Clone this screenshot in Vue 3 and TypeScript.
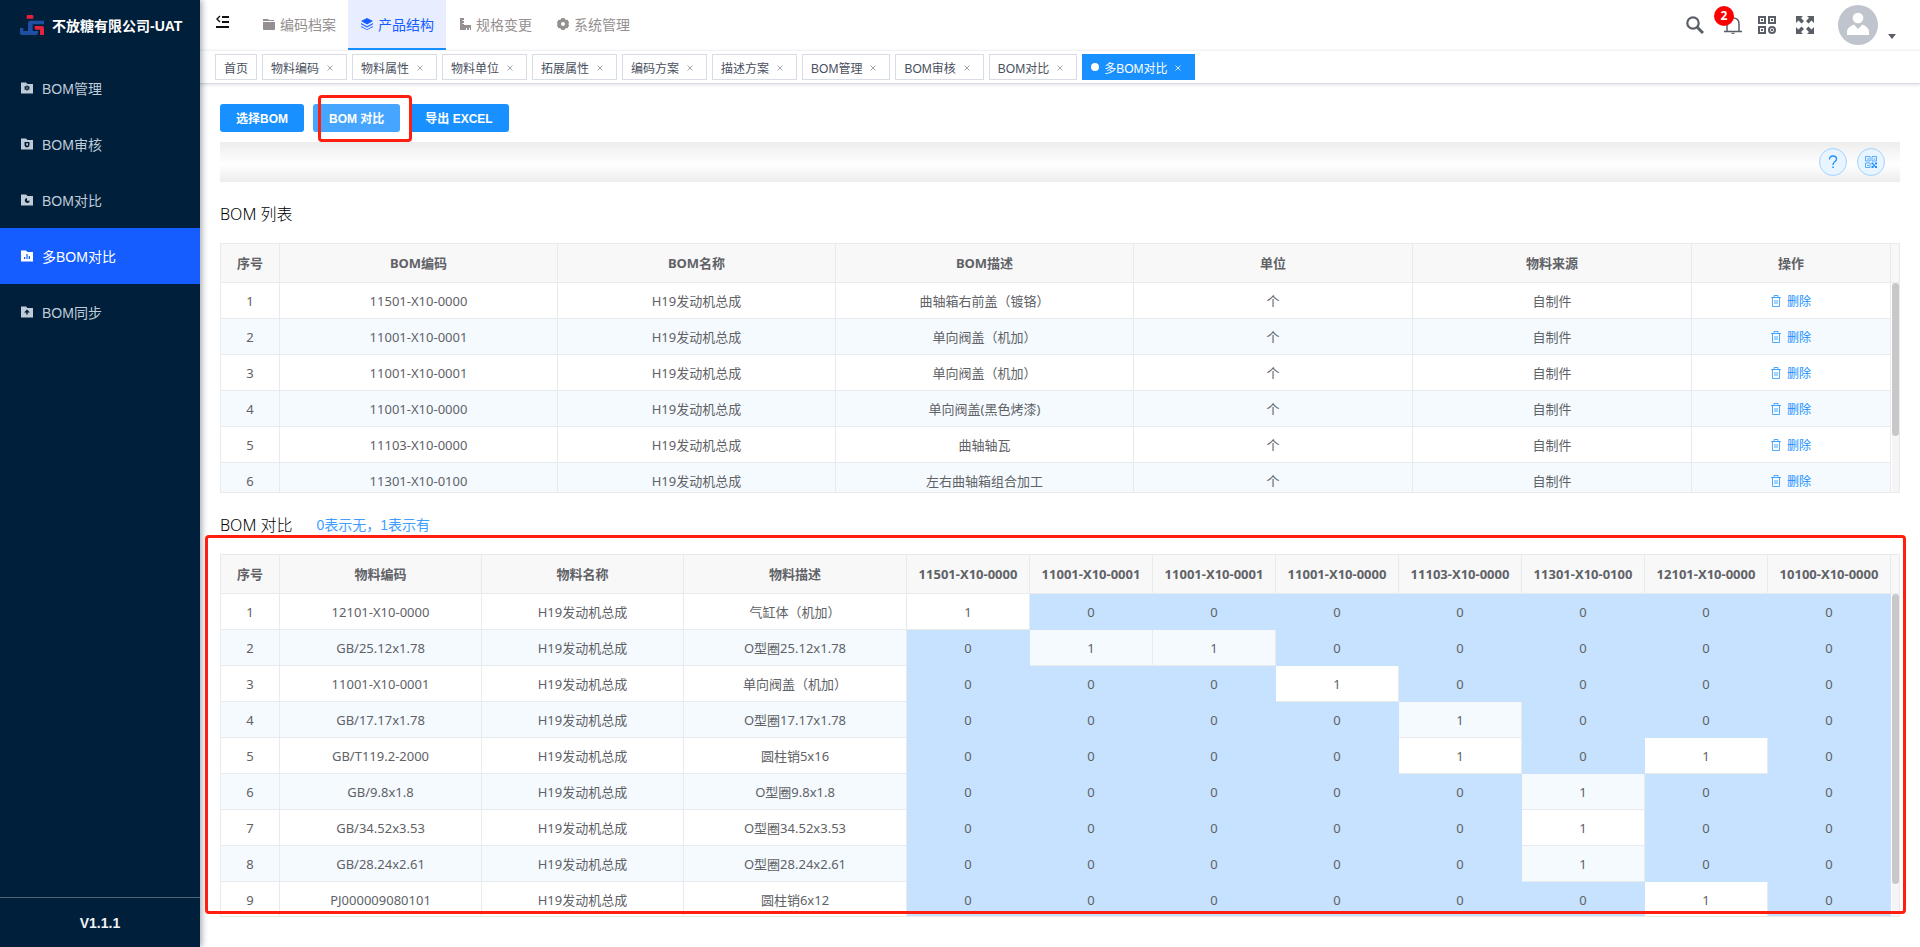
<script setup lang="ts">
import { ref } from 'vue'

interface Bom {
  code: string
  name: string
  desc: string
}

interface CompareRow {
  code: string
  name: string
  desc: string
  flags: number[]
}

const menu = [
  { label: 'BOM管理', icon: 'gear' },
  { label: 'BOM审核', icon: 'shield' },
  { label: 'BOM对比', icon: 'pie' },
  { label: '多BOM对比', icon: 'bars' },
  { label: 'BOM同步', icon: 'up' },
]
const activeMenu = ref('多BOM对比')

const modules = [
  { label: '编码档案', icon: 'folder' },
  { label: '产品结构', icon: 'layers' },
  { label: '规格变更', icon: 'ruler' },
  { label: '系统管理', icon: 'cog' },
]
const activeModule = ref('产品结构')

const tags = ref([
  '首页', '物料编码', '物料属性', '物料单位', '拓展属性', '编码方案',
  '描述方案', 'BOM管理', 'BOM审核', 'BOM对比', '多BOM对比',
])
const activeTag = ref('多BOM对比')

function closeTag(tag: string) {
  tags.value = tags.value.filter((t) => t !== tag)
}

const product = 'H19发动机总成'

const boms = ref<Bom[]>([
  { code: '11501-X10-0000', name: product, desc: '曲轴箱右前盖（镀铬）' },
  { code: '11001-X10-0001', name: product, desc: '单向阀盖（机加）' },
  { code: '11001-X10-0001', name: product, desc: '单向阀盖（机加）' },
  { code: '11001-X10-0000', name: product, desc: '单向阀盖(黑色烤漆)' },
  { code: '11103-X10-0000', name: product, desc: '曲轴轴瓦' },
  { code: '11301-X10-0100', name: product, desc: '左右曲轴箱组合加工' },
])

function removeBom(index: number) {
  boms.value.splice(index, 1)
}

const listColumns = [
  { label: '序号', width: 59 },
  { label: 'BOM编码', width: 278 },
  { label: 'BOM名称', width: 278 },
  { label: 'BOM描述', width: 298 },
  { label: '单位', width: 279 },
  { label: '物料来源', width: 279 },
  { label: '操作', width: 199 },
]

const compareColumns = [
  { label: '序号', width: 59 },
  { label: '物料编码', width: 202 },
  { label: '物料名称', width: 202 },
  { label: '物料描述', width: 223 },
  { label: '11501-X10-0000', width: 123 },
  { label: '11001-X10-0001', width: 123 },
  { label: '11001-X10-0001', width: 123 },
  { label: '11001-X10-0000', width: 123 },
  { label: '11103-X10-0000', width: 123 },
  { label: '11301-X10-0100', width: 123 },
  { label: '12101-X10-0000', width: 123 },
  { label: '10100-X10-0000', width: 123 },
]

const compareRows: CompareRow[] = [
  { code: '12101-X10-0000', name: product, desc: '气缸体（机加）', flags: [1, 0, 0, 0, 0, 0, 0, 0] },
  { code: 'GB/25.12x1.78', name: product, desc: 'O型圈25.12x1.78', flags: [0, 1, 1, 0, 0, 0, 0, 0] },
  { code: '11001-X10-0001', name: product, desc: '单向阀盖（机加）', flags: [0, 0, 0, 1, 0, 0, 0, 0] },
  { code: 'GB/17.17x1.78', name: product, desc: 'O型圈17.17x1.78', flags: [0, 0, 0, 0, 1, 0, 0, 0] },
  { code: 'GB/T119.2-2000', name: product, desc: '圆柱销5x16', flags: [0, 0, 0, 0, 1, 0, 1, 0] },
  { code: 'GB/9.8x1.8', name: product, desc: 'O型圈9.8x1.8', flags: [0, 0, 0, 0, 0, 1, 0, 0] },
  { code: 'GB/34.52x3.53', name: product, desc: 'O型圈34.52x3.53', flags: [0, 0, 0, 0, 0, 1, 0, 0] },
  { code: 'GB/28.24x2.61', name: product, desc: 'O型圈28.24x2.61', flags: [0, 0, 0, 0, 0, 1, 0, 0] },
  { code: 'PJ000009080101', name: product, desc: '圆柱销6x12', flags: [0, 0, 0, 0, 0, 0, 1, 0] },
]
</script>

<template>
  <div class="app">
    <aside class="sidebar">
      <div class="brand">
        <svg class="brand-logo" viewBox="0 0 72 60" aria-hidden="true">
          <path fill="#e8203c" d="M20 3q0-3 3-3h14q3 0 3 3v8H20z" />
          <path fill="#1f4fa3" d="M24 25q0-8 8-8h40v11H38v20h16v6q0 6-6 6H6q-6 0-6-6V39h10v9h14z" />
          <path fill="#e8203c" d="M44 33h22q6 0 6 6v21H60V44H48q-4 0-4-4z" />
        </svg>
        <strong>不放糖有限公司-UAT</strong>
      </div>
      <nav class="menu">
        <a
          v-for="item in menu"
          :key="item.label"
          href="#"
          class="menu-item"
          :class="{ active: item.label === activeMenu }"
          @click.prevent="activeMenu = item.label"
        >
          <svg class="menu-icon" viewBox="0 0 24 24" aria-hidden="true">
            <path v-if="item.icon === 'gear'" fill="currentColor" fill-rule="evenodd" d="M0 1h10l3 3h11v19H0zM10.500 7v2.500L8 8.200 6.500 10.800 9 12l-2.500 1.500L8 16l2.500-1.400V17h3v-2.400L16 16l1.500-2.500L15 12l2.500-1.200L16 8.200l-2.500 1.300V7zM12 10.500a1.500 1.500 0 1 1 0 3 1.500 1.500 0 0 1 0-3z" />
            <path v-else-if="item.icon === 'shield'" fill="currentColor" fill-rule="evenodd" d="M0 1h10l3 3h11v19H0zM7 8v6q0 4 5 5 5-1 5-5V8zM10.500 10.500h3.500v4q-1.500 1.500-3.500 0z" />
            <path v-else-if="item.icon === 'pie'" fill="currentColor" fill-rule="evenodd" d="M0 1h10l3 3h11v19H0zM12 8a5 5 0 1 0 5.500 5.500H12z" />
            <path v-else-if="item.icon === 'bars'" fill="currentColor" fill-rule="evenodd" d="M0 1h10l3 3h11v19H0zM6 14v4h2.500v-4zM10.800 8v10h2.500V8zM15.500 12v6H18v-6z" />
            <path v-else fill="currentColor" fill-rule="evenodd" d="M0 1h10l3 3h11v19H0zM12 7l-6 6h4.500v4h3v-4H18z" />
          </svg>
          <span>{{ item.label }}</span>
        </a>
      </nav>
      <div class="version">V1.1.1</div>
    </aside>

    <div class="content">
      <header class="topbar">
        <button type="button" class="icon-btn collapse" aria-label="收起菜单">
          <svg width="14" height="14" viewBox="0 0 14 14" aria-hidden="true">
            <path fill="none" stroke="#111" stroke-width="2" d="M6 2h7M6 7h7M0 12h13" />
            <path fill="none" stroke="#111" stroke-width="1.400" d="M4 1L1 4l3 3" />
          </svg>
        </button>
        <nav class="modules">
          <a
            v-for="item in modules"
            :key="item.label"
            href="#"
            class="module"
            :class="{ active: item.label === activeModule }"
            @click.prevent="activeModule = item.label"
          >
            <svg width="12" height="12" viewBox="0 0 12 12" aria-hidden="true">
              <path v-if="item.icon === 'folder'" fill="currentColor" d="M0 1h5l1 1h5v1H0zM0 4h12v7q0 1-1 1H1q-1 0-1-1z" />
              <g v-else-if="item.icon === 'layers'" fill="currentColor">
                <path d="M6 0l6 3-6 3.500L0 3z" />
                <path d="M0 5l6 3.300L12 5v1.300L6 9.500 0 6.300z" />
                <path d="M0 8l6 3.200L12 8v1L6 12 0 9z" />
              </g>
              <path v-else-if="item.icon === 'ruler'" fill="currentColor" d="M1 0h4v2H3.500v1H5v2H3.500v1H5v1h7v5h-1v-2h-1v2H8v-2H7v2H1z" />
              <path v-else fill="currentColor" fill-rule="evenodd" d="M4.500 0h3l.5 1.300 1.500.7 1.200-.3L12 4.500 11.400 6 12 7.500l-1.300 2.800-1.200-.3-1.500.7-.5 1.300h-3L4 10.700l-1.500-.7-1.200.3L0 7.500.6 6 0 4.500l1.300-2.800 1.200.3L4 1.300zM6 4a2 2 0 1 0 0 4 2 2 0 0 0 0-4z" />
            </svg>
            <span>{{ item.label }}</span>
          </a>
        </nav>
        <div class="tools">
          <button type="button" class="icon-btn" aria-label="搜索">
            <svg width="18" height="18" viewBox="0 0 18 18" aria-hidden="true">
              <circle cx="7" cy="7" r="5.700" fill="none" stroke="currentColor" stroke-width="2.200" />
              <path d="M11 11l6 6" stroke="currentColor" stroke-width="3" />
            </svg>
          </button>
          <button type="button" class="icon-btn bell" aria-label="消息">
            <svg width="18" height="18" viewBox="0 0 18 18" aria-hidden="true">
              <path fill="none" stroke="currentColor" stroke-width="1.500" d="M0 15.500h18M3 15.500V8q0-6 6-6t6 6v7.500M9 0v2" />
              <path fill="currentColor" d="M7 16.700h4q-.500 1.300-2 1.300t-2-1.300z" />
            </svg>
            <span class="badge">2</span>
          </button>
          <button type="button" class="icon-btn" aria-label="二维码">
            <svg width="18" height="18" viewBox="0 0 18 18" aria-hidden="true">
              <g fill="none" stroke="currentColor" stroke-width="2">
                <path d="M1 1h6v6H1zM11 1h6v6h-6zM1 11h6v6H1z" />
                <circle cx="14" cy="14" r="3" />
              </g>
              <path fill="currentColor" d="M3 3h2v2H3zM13 3h2v2h-2zM3 13h2v2H3zM13 13h2v2h-2z" />
            </svg>
          </button>
          <button type="button" class="icon-btn" aria-label="全屏">
            <svg width="18" height="18" viewBox="0 0 18 18" aria-hidden="true">
              <path fill="currentColor" d="M0 0h7L5 2l3 3-2.500 2.500L2.500 4.500 0 7zM18 0h-7l2 2-3 3 2.500 2.500 3-3L18 7zM0 18h7l-2-2 3-3-2.500-2.500-3 3L0 11zM18 18h-7l2-2-3-3 2.500-2.500 3 3L18 11z" />
            </svg>
          </button>
          <button type="button" class="icon-btn user" aria-label="用户菜单">
            <svg width="40" height="40" viewBox="0 0 40 40" aria-hidden="true">
              <circle cx="20" cy="20" r="20" fill="#c0c4cc" />
              <circle cx="20" cy="13" r="5.300" fill="#fff" />
              <path fill="#fff" d="M9 30v-3q0-5 7-7.500l4 4.500 4.500-4.500Q31 22 31 27v3z" />
            </svg>
            <svg class="caret" width="8" height="5" viewBox="0 0 8 5" aria-hidden="true">
              <path fill="currentColor" d="M0 0h8L4 5z" />
            </svg>
          </button>
        </div>
      </header>

      <ul class="tags">
        <li v-for="tag in tags" :key="tag" class="tag" :class="{ active: tag === activeTag }">
          <i v-if="tag === activeTag" class="dot"></i>
          <a href="#" @click.prevent="activeTag = tag">{{ tag }}</a>
          <button v-if="tag !== '首页'" type="button" class="close" :aria-label="'关闭' + tag" @click="closeTag(tag)">
            <svg width="6" height="6" viewBox="0 0 6 6" aria-hidden="true">
              <path d="M0.500 0.500l5 5M5.500 0.500l-5 5" stroke="currentColor" />
            </svg>
          </button>
        </li>
      </ul>

      <main class="page">
        <div class="actions">
          <button type="button" class="primary">选择BOM</button>
          <div class="marked">
            <button type="button" class="primary hover">BOM 对比</button>
          </div>
          <button type="button" class="primary">导出 EXCEL</button>
        </div>

        <div class="toolbar">
          <button type="button" class="round" aria-label="帮助">
            <svg width="12" height="14" viewBox="0 0 12 14" aria-hidden="true">
              <path fill="none" stroke="currentColor" stroke-width="1.300" d="M2.500 4.500Q2.500 1 6 1t3.500 3Q9.500 5.500 8 6.500T6 9.500v.5" />
              <path fill="currentColor" d="M5.300 11.500h1.500v1.500H5.300z" />
            </svg>
          </button>
          <button type="button" class="round" aria-label="二维码">
            <svg width="12" height="12" viewBox="0 0 12 12" aria-hidden="true">
              <path fill="none" stroke="currentColor" stroke-opacity="0.700" d="M.5.5h4.500v4.500H.5zM7 .5h4.500v4.500H7zM.5 7h4.500v4.500H.5zM2 3h2M8.500 3h2M2 9.500h2" />
              <path fill="currentColor" d="M6.500 6.500h2v2h-2zM10 6.500h2v2h-2zM8 8.500h2v2H8zM6.500 10h2v2h-2zM10 10h2v2h-2z" />
            </svg>
          </button>
        </div>

        <div class="section-head">
          <h2>BOM 列表</h2>
        </div>
        <div class="grid list">
          <div class="viewport">
            <table>
              <colgroup>
                <col v-for="(col, i) in listColumns" :key="i" :style="{ width: col.width + 'px' }" />
              </colgroup>
              <thead>
                <tr>
                  <th v-for="col in listColumns" :key="col.label" scope="col">{{ col.label }}</th>
                </tr>
              </thead>
              <tbody>
                <tr v-for="(bom, i) in boms" :key="i">
                  <td>{{ i + 1 }}</td>
                  <td>{{ bom.code }}</td>
                  <td>{{ bom.name }}</td>
                  <td>{{ bom.desc }}</td>
                  <td>个</td>
                  <td>自制件</td>
                  <td>
                    <button type="button" class="delete" @click="removeBom(i)">
                      <svg width="10" height="12" viewBox="0 0 10 12" aria-hidden="true">
                        <path fill="none" stroke="currentColor" stroke-opacity="0.750" d="M0 2.500h10M3 2.500v-2h4v2M1.500 2.500v9h7v-9M4 5v4M6 5v4" />
                      </svg>
                      <span>删除</span>
                    </button>
                  </td>
                </tr>
              </tbody>
            </table>
          </div>
          <div class="gutter">
            <div class="gutter-head"></div>
            <div class="track"><div class="thumb"></div></div>
          </div>
        </div>

        <div class="section-head">
          <h2>BOM 对比</h2>
          <span class="hint">0表示无，1表示有</span>
        </div>
        <div class="grid compare">
          <div class="viewport">
            <table>
              <colgroup>
                <col v-for="(col, i) in compareColumns" :key="i" :style="{ width: col.width + 'px' }" />
              </colgroup>
              <thead>
                <tr>
                  <th v-for="(col, i) in compareColumns" :key="i" scope="col">{{ col.label }}</th>
                </tr>
              </thead>
              <tbody>
                <tr v-for="(row, i) in compareRows" :key="i">
                  <td>{{ i + 1 }}</td>
                  <td>{{ row.code }}</td>
                  <td>{{ row.name }}</td>
                  <td>{{ row.desc }}</td>
                  <td v-for="(flag, f) in row.flags" :key="f" :class="{ absent: flag === 0 }">{{ flag }}</td>
                </tr>
              </tbody>
            </table>
          </div>
          <div class="gutter">
            <div class="gutter-head"></div>
            <div class="track"><div class="thumb"></div></div>
          </div>
        </div>
      </main>
    </div>
  </div>
</template>

<style>
body {
  margin: 0;
  background: #fff;
}
</style>

<style scoped>
* {
  box-sizing: border-box;
}

.app {
  display: flex;
  height: 100vh;
  min-height: 720px;
  font-family: "Liberation Sans", "Noto Sans CJK SC", sans-serif;
  font-size: 14px;
  color: #606266;
}

a {
  color: inherit;
  text-decoration: none;
}

button {
  font-family: inherit;
  cursor: pointer;
}

svg {
  display: block;
  flex: none;
}

.sidebar {
  position: relative;
  z-index: 2;
  display: flex;
  flex: none;
  flex-direction: column;
  width: 200px;
  background: #001f3a;
  box-shadow: 2px 0 6px rgba(0, 21, 41, 0.35);
}

.brand {
  display: flex;
  align-items: center;
  gap: 8px;
  height: 50px;
  padding-left: 20px;
  color: #fff;
  white-space: nowrap;
}

.brand-logo {
  width: 24px;
  height: 20px;
}

.menu {
  flex: 1;
  padding-top: 10px;
}

.menu-item {
  display: flex;
  align-items: center;
  gap: 9px;
  height: 56px;
  padding-left: 21px;
  color: #bfcbd9;
}

.menu-item.active {
  background: #165dff;
  color: #fff;
}

.menu-icon {
  width: 12px;
  height: 12px;
}

.version {
  height: 50px;
  border-top: 1px solid #4d6275;
  color: #f0f3f6;
  font-weight: bold;
  line-height: 50px;
  text-align: center;
}

.content {
  display: flex;
  flex: 1;
  flex-direction: column;
  min-width: 0;
}

.topbar {
  display: flex;
  flex: none;
  height: 50px;
}

.icon-btn {
  display: flex;
  align-items: center;
  padding: 0;
  border: 0;
  background: none;
  color: #5a5e66;
}

.collapse {
  width: 50px;
  height: 44px;
  padding-left: 16px;
}

.modules {
  display: flex;
}

.module {
  display: flex;
  align-items: center;
  gap: 5px;
  width: 98px;
  padding-left: 13px;
  border-bottom: 2px solid transparent;
  color: #958f8f;
}

.module.active {
  border-bottom-color: #1890ff;
  background: #e8eeff;
  color: #165dff;
}

.tools {
  display: flex;
  align-items: center;
  gap: 20px;
  margin-left: auto;
  padding-right: 24px;
}

.bell {
  position: relative;
  width: 14px;
}

.badge {
  position: absolute;
  top: -10px;
  left: -10px;
  width: 20px;
  height: 20px;
  border-radius: 10px;
  background: #f00;
  color: #fff;
  font-family: "Noto Sans", sans-serif;
  font-size: 12px;
  font-weight: bold;
  line-height: 20px;
  text-align: center;
}

.user {
  gap: 10px;
  margin-left: 4px;
}

.caret {
  margin-top: 22px;
}

.tags {
  display: flex;
  flex: none;
  gap: 5px;
  height: 34px;
  margin: 0;
  padding: 3px 15px 0;
  border-top: 1px solid #f0f2f3;
  border-bottom: 1px solid #d8dce5;
  box-shadow: 0 1px 3px rgba(0, 0, 0, 0.12);
  list-style: none;
}

.tag {
  display: flex;
  align-items: center;
  gap: 3px;
  height: 26px;
  padding: 0 8px;
  border: 1px solid #d8dce5;
  color: #495060;
  font-size: 12px;
  white-space: nowrap;
}

.tag.active {
  border-color: #1890ff;
  background: #1890ff;
  color: #fff;
}

.dot {
  width: 8px;
  height: 8px;
  margin-right: 2px;
  border-radius: 50%;
  background: #fff;
}

.close {
  display: flex;
  align-items: center;
  justify-content: center;
  width: 16px;
  height: 16px;
  padding: 2px 0 0;
  border: 0;
  background: none;
  color: #a0a4ac;
}

.tag.active .close {
  color: #d0e8ff;
}

.page {
  display: flex;
  flex: 1;
  flex-direction: column;
  min-height: 0;
  padding: 20px 20px 30px;
}

.actions {
  display: flex;
  flex: none;
  gap: 9px;
}

.primary {
  height: 28px;
  padding: 0 16px 2px;
  border: 0;
  border-radius: 3px;
  background: #1890ff;
  color: #fff;
  font-size: 12px;
  font-weight: bold;
  white-space: nowrap;
}

.primary.hover {
  background: #46a6ff;
}

.marked {
  position: relative;
}

.marked::after {
  position: absolute;
  z-index: 1;
  inset: -9px -12px -10px 5px;
  border: 3px solid #ff1e10;
  border-radius: 4px;
  content: "";
  pointer-events: none;
}

.toolbar {
  display: flex;
  flex: none;
  align-items: center;
  justify-content: flex-end;
  gap: 10px;
  height: 40px;
  margin-top: 10px;
  padding-right: 15px;
  background: linear-gradient(#ededed, #fff 55%, #ededed);
}

.round {
  display: flex;
  align-items: center;
  justify-content: center;
  width: 28px;
  height: 28px;
  padding: 0;
  border: 1px solid #a3d3ff;
  border-radius: 50%;
  background: #e8f4ff;
  color: #1890ff;
}

.section-head {
  display: flex;
  flex: none;
  align-items: center;
  gap: 24px;
  height: 61px;
}

h2 {
  margin: 0;
  color: #000;
  font-family: "Noto Sans", "Noto Sans CJK SC", sans-serif;
  font-size: 16px;
  font-weight: 300;
}

.hint {
  color: #409eff;
}

.grid {
  position: relative;
  display: flex;
  border: 1px solid #e8eaec;
  font-family: "Noto Sans", "Noto Sans CJK SC", sans-serif;
  font-size: 13px;
}

.list {
  flex: none;
  height: 250px;
}

.compare {
  flex: 1;
  min-height: 0;
}

.compare::after {
  position: absolute;
  z-index: 3;
  inset: -20px -7px 2px -16px;
  border: 3px solid #ff1e10;
  border-radius: 4px;
  content: "";
  pointer-events: none;
}

.viewport {
  flex: 1;
  min-width: 0;
  overflow-y: auto;
  scrollbar-width: none;
}

table {
  width: 100%;
  border-collapse: separate;
  border-spacing: 0;
  table-layout: fixed;
}

th,
td {
  padding: 0;
  border-right: 1px solid #e8eaec;
  border-bottom: 1px solid #e8eaec;
  line-height: 20px;
  text-align: center;
  white-space: nowrap;
}

th {
  position: sticky;
  top: 0;
  z-index: 1;
  height: 39px;
  background: #f8f8f9;
}

td {
  height: 36px;
}

tbody tr:nth-child(even) {
  background: #f5faff;
}

td.absent {
  border-color: #c6e2ff;
  background: #c6e2ff;
}

.delete {
  display: inline-flex;
  align-items: center;
  gap: 6px;
  padding: 0 0 1px;
  border: 0;
  background: none;
  color: #1890ff;
  font-size: 12px;
  vertical-align: middle;
}

.gutter {
  display: flex;
  flex: none;
  flex-direction: column;
  width: 8px;
}

.gutter-head {
  flex: none;
  height: 39px;
  border-bottom: 1px solid #e8eaec;
  background: #f8f8f9;
}

.track {
  flex: 1;
  margin-left: 1px;
  background: #f5f5f5;
}

.thumb {
  height: 73%;
  border-radius: 4px;
  background: #c8c8c8;
}

.compare .thumb {
  height: 90%;
}
</style>
